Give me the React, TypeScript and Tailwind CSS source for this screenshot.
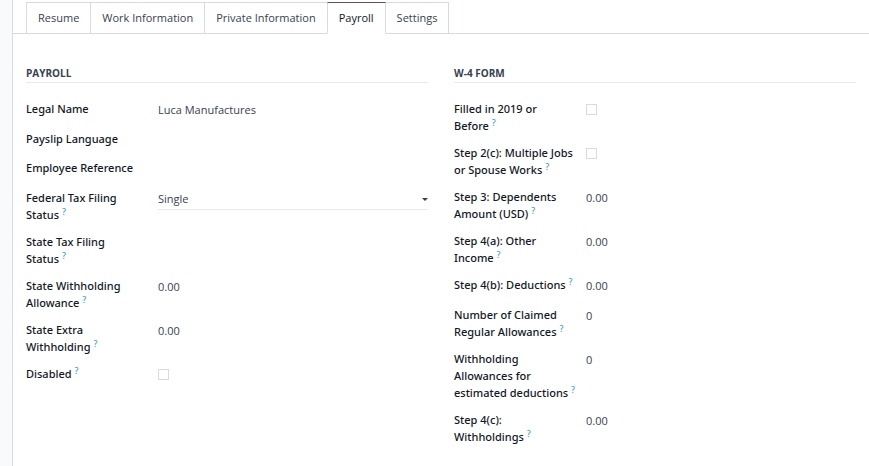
import { useId, useState } from "react";
import clsx from "clsx";

interface Field {
  label: string[];
  help?: boolean;
  type: "text" | "select" | "checkbox" | "readonly" | "empty";
  value?: string;
}

const TABS = [
  "Resume",
  "Work Information",
  "Private Information",
  "Payroll",
  "Settings",
];

const PAYROLL_FIELDS: Field[] = [
  { label: ["Legal Name"], type: "text", value: "Luca Manufactures" },
  { label: ["Payslip Language"], type: "empty" },
  { label: ["Employee Reference"], type: "readonly" },
  {
    label: ["Federal Tax Filing", "Status"],
    help: true,
    type: "select",
    value: "Single",
  },
  { label: ["State Tax Filing", "Status"], help: true, type: "empty" },
  {
    label: ["State Withholding", "Allowance"],
    help: true,
    type: "text",
    value: "0.00",
  },
  {
    label: ["State Extra", "Withholding"],
    help: true,
    type: "text",
    value: "0.00",
  },
  { label: ["Disabled"], help: true, type: "checkbox" },
];

const W4_FIELDS: Field[] = [
  { label: ["Filled in 2019 or", "Before"], help: true, type: "checkbox" },
  {
    label: ["Step 2(c): Multiple Jobs", "or Spouse Works"],
    help: true,
    type: "checkbox",
  },
  {
    label: ["Step 3: Dependents", "Amount (USD)"],
    help: true,
    type: "text",
    value: "0.00",
  },
  {
    label: ["Step 4(a): Other", "Income"],
    help: true,
    type: "text",
    value: "0.00",
  },
  {
    label: ["Step 4(b): Deductions"],
    help: true,
    type: "text",
    value: "0.00",
  },
  {
    label: ["Number of Claimed", "Regular Allowances"],
    help: true,
    type: "text",
    value: "0",
  },
  {
    label: ["Withholding", "Allowances for", "estimated deductions"],
    help: true,
    type: "text",
    value: "0",
  },
  {
    label: ["Step 4(c):", "Withholdings"],
    help: true,
    type: "text",
    value: "0.00",
  },
];

const LABEL_CLASS =
  "w-31 shrink-0 font-['Noto_Sans',sans-serif] font-medium leading-[17px] text-[#111827]";

const FieldRow = ({ field }: { field: Field }) => {
  const id = useId();
  const isStatic = field.type === "readonly" || field.type === "empty";

  const label = field.label.map((line, index) => (
    <span key={line} className="block h-[17px] whitespace-nowrap">
      {line}{" "}
      {field.help && index === field.label.length - 1 && (
        <sup className="-top-1 text-[9px] leading-none font-normal text-[#2b8fc9]">
          ?
        </sup>
      )}
    </span>
  ));

  return (
    <div className="flex gap-2">
      {isStatic ? (
        <span className={LABEL_CLASS}>{label}</span>
      ) : (
        <label htmlFor={id} className={LABEL_CLASS}>
          {label}
        </label>
      )}

      {field.type === "text" && (
        <input
          id={id}
          type="text"
          defaultValue={field.value}
          className="h-5 min-w-0 flex-1 leading-5 outline-none"
        />
      )}
      {field.type === "select" && (
        <div className="relative min-w-0 flex-1">
          <select
            id={id}
            defaultValue={field.value}
            className="block h-[21px] w-full appearance-none border-b border-[#e7e9ed] bg-transparent outline-none"
          >
            <option>{field.value}</option>
          </select>
          <svg
            className="pointer-events-none absolute top-[9px] right-0 h-[3px] w-[6px]"
            viewBox="0 0 6 3"
            fill="#374151"
            aria-hidden="true"
          >
            <path d="M0 0h6L3 3z" />
          </svg>
        </div>
      )}
      {field.type === "checkbox" && (
        <input
          id={id}
          type="checkbox"
          className="mt-1 size-[11px] appearance-none border border-[#d8dadd] bg-white checked:bg-[#714b67]"
        />
      )}
      {field.type === "readonly" && <span className="h-5" />}
      {field.type === "empty" && <span className="h-[19px]" />}
    </div>
  );
};

const FieldGroup = ({ title, fields }: { title: string; fields: Field[] }) => (
  <section className="min-w-0 flex-1">
    <h2 className="border-b border-[#e7e9ed] pb-px text-[10px] leading-4 font-bold uppercase">
      {title}
    </h2>
    <div className="mt-[17px] flex flex-col gap-[10px]">
      {fields.map((field) => (
        <FieldRow key={field.label.join(" ")} field={field} />
      ))}
    </div>
  </section>
);

const App = () => {
  const [activeTab, setActiveTab] = useState("Payroll");

  return (
    <div className="flex min-h-screen bg-[#f9fafb] pl-3 font-['Open_Sans','Noto_Sans',sans-serif] text-[11px] text-[#374151]">
      <main className="min-w-0 flex-1 border-l border-[#d8dadd] bg-white">
        <div
          role="tablist"
          className="flex border-b border-[#d8dadd] pt-[2px] pl-[13px]"
        >
          {TABS.map((tab) => (
            <button
              key={tab}
              type="button"
              role="tab"
              aria-selected={tab === activeTab}
              onClick={() => setActiveTab(tab)}
              className={clsx(
                "-mb-px h-8 border px-[11px] not-first:-ml-px",
                tab === activeTab
                  ? "z-10 border-[#d8dadd] border-t-[#714b53] border-b-white text-[#111827]"
                  : "border-[#d8dadd]"
              )}
            >
              {tab}
            </button>
          ))}
        </div>

        <div className="flex gap-[26px] px-[13px] pt-[31px] pb-4">
          <FieldGroup title="Payroll" fields={PAYROLL_FIELDS} />
          <FieldGroup title="W-4 Form" fields={W4_FIELDS} />
        </div>
      </main>
    </div>
  );
};

export default App;
